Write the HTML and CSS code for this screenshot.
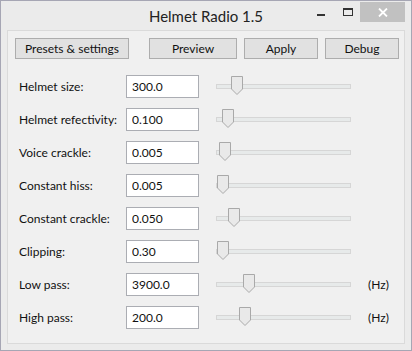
FILE: index.html
```html
<!DOCTYPE html>
<html lang="en">
<head>
    <meta charset="UTF-8">
    <title>Helmet Radio 1.5</title>
    <link rel="stylesheet" href="styles.css">
</head>
<body>
    <div class="window">
        <div class="titlebar">
            <div></div>
            <div class="title">Helmet Radio 1.5</div>
            <div class="controls">
                <span class="btn-min"><span></span></span>
                <span class="btn-max"><span></span></span>
                <span class="btn-close">
                    <svg width="10" height="9" viewBox="0 0 10 9"><path d="M1 0.5 L9 8.5 M9 0.5 L1 8.5" stroke="#fff" stroke-width="1.8"/></svg>
                </span>
            </div>
        </div>

        <div class="client">
            <div class="toolbar">
                <button class="w-presets">Presets &amp; settings</button>
                <button class="w-preview">Preview</button>
                <button class="w-apply">Apply</button>
                <button class="w-debug">Debug</button>
            </div>

            <div class="rows">
                <div class="row">
                    <label>Helmet size:</label>
                    <input type="text" value="300.0">
                    <div class="slider"><div class="track"></div><svg class="thumb" style="left: 15px" width="12" height="19" viewBox="0 0 12 19"><path d="M0.5 0.5 H11.5 V13 L6 18.5 L0.5 13 Z"/></svg></div>
                </div>
                <div class="row">
                    <label>Helmet refectivity:</label>
                    <input type="text" value="0.100">
                    <div class="slider"><div class="track"></div><svg class="thumb" style="left: 6px" width="12" height="19" viewBox="0 0 12 19"><path d="M0.5 0.5 H11.5 V13 L6 18.5 L0.5 13 Z"/></svg></div>
                </div>
                <div class="row">
                    <label>Voice crackle:</label>
                    <input type="text" value="0.005">
                    <div class="slider"><div class="track"></div><svg class="thumb" style="left: 3px" width="12" height="19" viewBox="0 0 12 19"><path d="M0.5 0.5 H11.5 V13 L6 18.5 L0.5 13 Z"/></svg></div>
                </div>
                <div class="row">
                    <label>Constant hiss:</label>
                    <input type="text" value="0.005">
                    <div class="slider"><div class="track"></div><svg class="thumb" style="left: 1px" width="12" height="19" viewBox="0 0 12 19"><path d="M0.5 0.5 H11.5 V13 L6 18.5 L0.5 13 Z"/></svg></div>
                </div>
                <div class="row">
                    <label>Constant crackle:</label>
                    <input type="text" value="0.050">
                    <div class="slider"><div class="track"></div><svg class="thumb" style="left: 12px" width="12" height="19" viewBox="0 0 12 19"><path d="M0.5 0.5 H11.5 V13 L6 18.5 L0.5 13 Z"/></svg></div>
                </div>
                <div class="row">
                    <label>Clipping:</label>
                    <input type="text" value="0.30">
                    <div class="slider"><div class="track"></div><svg class="thumb" style="left: 1px" width="12" height="19" viewBox="0 0 12 19"><path d="M0.5 0.5 H11.5 V13 L6 18.5 L0.5 13 Z"/></svg></div>
                </div>
                <div class="row">
                    <label>Low pass:</label>
                    <input type="text" value="3900.0">
                    <div class="slider"><div class="track"></div><svg class="thumb" style="left: 27px" width="12" height="19" viewBox="0 0 12 19"><path d="M0.5 0.5 H11.5 V13 L6 18.5 L0.5 13 Z"/></svg></div>
                    <span class="unit">(Hz)</span>
                </div>
                <div class="row">
                    <label>High pass:</label>
                    <input type="text" value="200.0">
                    <div class="slider"><div class="track"></div><svg class="thumb" style="left: 23px" width="12" height="19" viewBox="0 0 12 19"><path d="M0.5 0.5 H11.5 V13 L6 18.5 L0.5 13 Z"/></svg></div>
                    <span class="unit">(Hz)</span>
                </div>
            </div>
        </div>
    </div>
</body>
</html>
```

FILE: styles.css
```css
body {
    margin: 0;
    padding: 0;
    background-color: #ebebeb;
    font-family: 'Lato', 'Noto Sans', sans-serif;
}

.window {
    width: 412px;
    height: 351px;
    box-sizing: border-box;
    border: 1px solid #a6a6b4;
    background-color: #ebebeb;
    padding: 0 6px 6px 6px;
}

.titlebar {
    display: grid;
    grid-template-columns: 1fr auto 1fr;
    height: 29px;
}

.title {
    font-size: 15px;
    color: #222;
    line-height: 31px;
}

.controls {
    display: flex;
    justify-content: flex-end;
    align-items: flex-start;
}

.btn-min {
    width: 26px;
    height: 20px;
}

.btn-min span {
    display: block;
    width: 8px;
    height: 2px;
    background-color: #333;
    margin: 13px 0 0 9px;
}

.btn-max {
    width: 26px;
    height: 20px;
}

.btn-max span {
    display: block;
    width: 8px;
    height: 5px;
    border: 1px solid #333;
    border-top-width: 2px;
    margin: 7px 0 0 9px;
}

.btn-close {
    width: 45px;
    height: 20px;
    margin-top: 1px;
    background-color: #c1c1c1;
    display: flex;
    align-items: center;
    justify-content: center;
}

.client {
    height: 314px;
    box-sizing: border-box;
    border: 1px solid #dadada;
    background-color: #f0f0f0;
    padding: 7px 0 0 7px;
}

.toolbar {
    display: flex;
    gap: 7px;
}

button {
    height: 21px;
    box-sizing: border-box;
    padding: 0;
    border: 1px solid #adadad;
    background-color: #e1e1e1;
    font-family: inherit;
    font-size: 12px;
    color: #111;
}

.w-presets {
    width: 114px;
    margin-right: 13px;
}

.w-preview {
    width: 88px;
}

.w-apply,
.w-debug {
    width: 74px;
}

.rows {
    padding: 11px 0 0 4px;
}

.row {
    display: flex;
    align-items: center;
    height: 33px;
}

label {
    width: 107px;
    font-size: 12px;
    color: #111;
}

input {
    width: 73px;
    height: 23px;
    box-sizing: border-box;
    border: 1px solid #abadb3;
    background-color: #fff;
    padding: 0 5px;
    font-family: inherit;
    font-size: 12px;
    color: #111;
    outline: none;
}

.slider {
    position: relative;
    width: 135px;
    height: 5px;
    margin-left: 17px;
}

.track {
    height: 5px;
    box-sizing: border-box;
    border: 1px solid #d6d6d6;
    background-color: #e7eaea;
}

.thumb {
    position: absolute;
    top: -8px;
}

.thumb path {
    fill: #e9e9e9;
    stroke: #a9a9a9;
}

.unit {
    margin-left: 17px;
    font-size: 12px;
    color: #111;
}
```
